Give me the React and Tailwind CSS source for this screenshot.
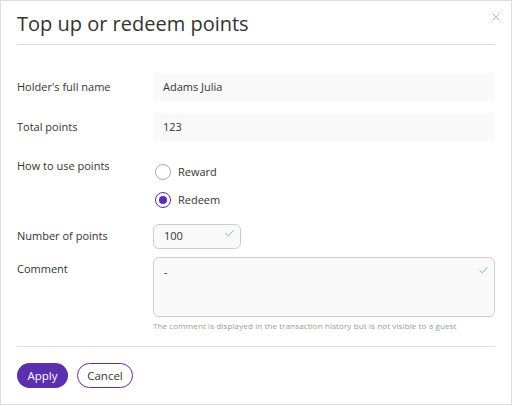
import { X, Check } from 'lucide-react';

function Row({ label, children, className = '' }) {
  return (
    <div className={`flex ${className}`}>
      <div className="w-[136px] shrink-0 text-[11px] text-[#333]">{label}</div>
      <div className="flex-1">{children}</div>
    </div>
  );
}

function Radio({ checked, label }) {
  return (
    <label className="flex items-center gap-[7px] h-[16px] text-[11px] text-[#333]">
      <span
        className={`w-[16px] h-[16px] rounded-full border flex items-center justify-center bg-white ${
          checked ? 'border-[#5b2fae]' : 'border-[#aaa]'
        }`}
      >
        {checked && <span className="w-[8px] h-[8px] rounded-full bg-[#5b2fae]" />}
      </span>
      {label}
    </label>
  );
}

export default function App() {
  return (
    <div
      className="w-[512px] h-[405px] border border-[#ddd] bg-white relative"
      style={{ fontFamily: '"Open Sans", "Noto Sans", sans-serif' }}
    >
      <button className="absolute right-[9px] top-[10px] text-[#999]">
        <X size={12} strokeWidth={1.3} />
      </button>

      <div className="px-[16px]">
        {/* Header */}
        <div className="pt-[11px] pb-[8px] border-b border-[#ddd]">
          <h2 className="text-[20px] leading-[24px] text-[#333]">Top up or redeem points</h2>
        </div>

        {/* Form */}
        <div className="pt-[28px] flex flex-col">
          <Row label="Holder's full name" className="items-center">
            <div className="h-[28px] bg-[#f9f9f9] flex items-center px-[10px] text-[11px] text-[#333]">
              Adams Julia
            </div>
          </Row>

          <Row label="Total points" className="items-center mt-[12px]">
            <div className="h-[28px] bg-[#f9f9f9] flex items-center px-[10px] text-[11px] text-[#333]">
              123
            </div>
          </Row>

          <Row label="How to use points" className="mt-[17px]">
            <div className="flex flex-col gap-[12px] pt-[6px] pl-[2px]">
              <Radio label="Reward" />
              <Radio checked label="Redeem" />
            </div>
          </Row>

          <Row label="Number of points" className="items-center mt-[16px]">
            <div className="w-[88px] h-[25px] bg-[#f9f9f9] border border-[#ccc] rounded-[6px] flex items-center justify-between px-[10px] text-[11px] text-[#333]">
              100
              <Check size={11} strokeWidth={1.6} className="text-[#2fae98] -mt-[6px] -mr-[5px]" />
            </div>
          </Row>

          <Row label={<div className="pt-[4px]">Comment</div>} className="mt-[8px]">
            <div className="h-[60px] bg-[#f9f9f9] border border-[#ccc] rounded-[6px] flex justify-between pl-[10px] pr-[5px] pt-[7px] text-[11px] text-[#333]">
              <span className="leading-[14px]">-</span>
              <Check size={11} strokeWidth={1.6} className="text-[#2fae98]" />
            </div>
            <p className="mt-[3px] text-[8px] leading-[12px] text-[#999] tracking-[0.12px]">
              The comment is displayed in the transaction history but is not visible to a guest
            </p>
          </Row>
        </div>

        {/* Footer */}
        <div className="mt-[14px] border-t border-[#ddd] pt-[16px] flex gap-[9px]">
          <button className="h-[25px] w-[51px] rounded-full bg-[#5b2fae] text-white text-[11.5px]">
            Apply
          </button>
          <button className="h-[25px] w-[56px] rounded-full border border-[#5b2fae] text-[#333] text-[11.5px]">
            Cancel
          </button>
        </div>
      </div>
    </div>
  );
}
